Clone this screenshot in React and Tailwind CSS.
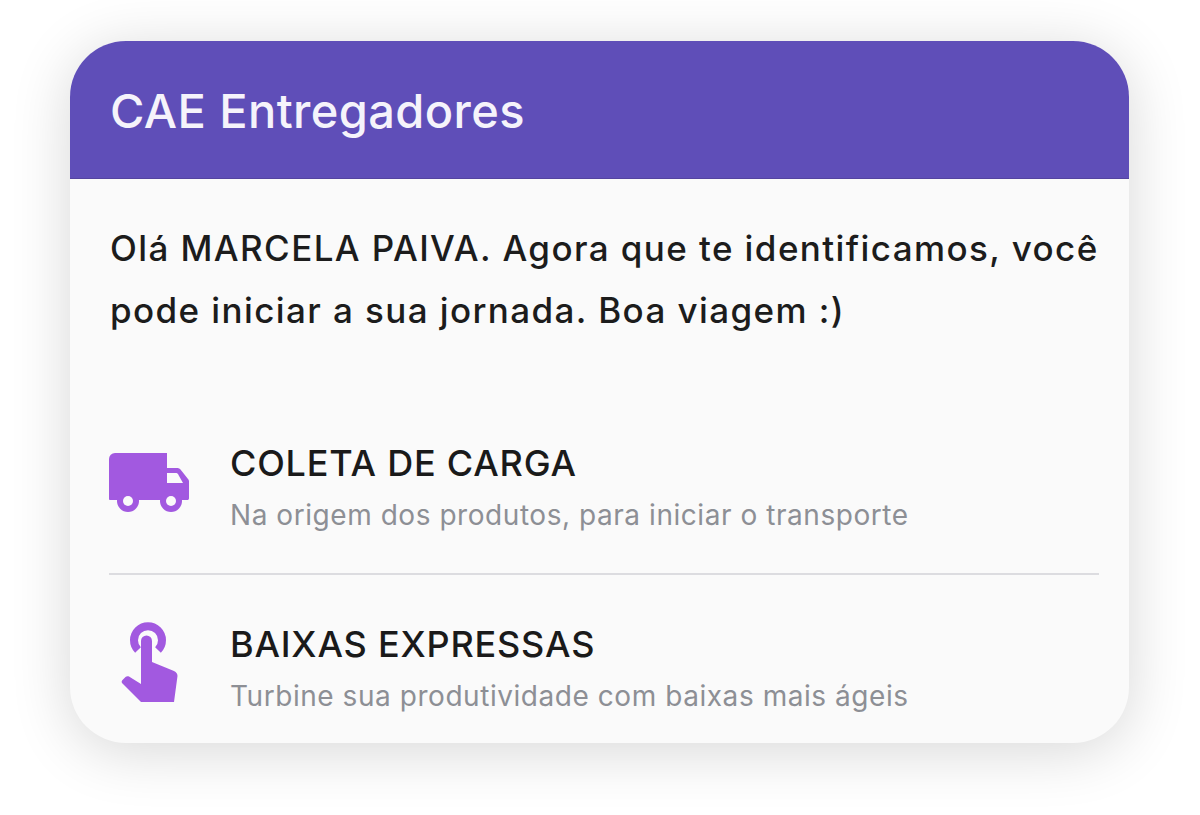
const TruckIcon = () => (
  <svg className="w-[81px] h-[60px]" viewBox="0 0 81 60" fill="#a259e0">
    <path fillRule="evenodd" d="M0 6a6 6 0 0 1 6-6h52v15h10c1.500 0 2.500.5 3.500 1.500L79 26c1 1 1 2 1 3v16c0 1.500-.5 2-2 2H1c-.5 0-1-.5-1-1zM58 20v10h16l-4.500-8c-.5-1.500-1.500-2-3-2z" />
    <circle cx="19" cy="48" r="11" />
    <circle cx="62" cy="48" r="11" />
    <circle cx="19" cy="48" r="5" fill="#fafafa" />
    <circle cx="62" cy="48" r="5" fill="#fafafa" />
  </svg>
)

const TapIcon = () => (
  <svg className="w-[58px] h-[82px]" viewBox="0 0 58 82" fill="#a259e0">
    <path d="M17 28A14 14 0 1 1 37 28" fill="none" stroke="#a259e0" strokeWidth="8" />
    <path d="M20 19a5.500 5.500 0 0 1 11 0v21l22 9c2.500 1 3.500 3 3.500 5L53 80H20L1 61c-.5-1-.5-2 .5-3l3-3c1-1 2.500-1 3.500-.5L20 62z" />
  </svg>
)

const options = [
  { title: 'COLETA DE CARGA', desc: 'Na origem dos produtos, para iniciar o transporte', icon: <TruckIcon />, iconClass: 'pb-[10px]' },
  { title: 'BAIXAS EXPRESSAS', desc: 'Turbine sua produtividade com baixas mais ágeis', icon: <TapIcon />, iconClass: 'pb-[12px]' },
]

export default function App() {
  return (
    <div className="w-[1200px] h-[815px] bg-white overflow-hidden pt-[41px] pl-[70px] font-['Inter',sans-serif]">
      <div className="w-[1059px] h-[702px] rounded-[56px] overflow-hidden bg-[#fafafa] shadow-[0_8px_60px_rgba(0,0,0,0.16)]">
        {/* Header */}
        <div className="h-[138px] bg-[#5f4eb8] flex items-center pl-[40px] pt-[2px] border-b border-[#54449f]">
          <h1 className="text-[47px] leading-none font-[450] text-[#f5f3fb] tracking-[0.4px]">CAE Entregadores</h1>
        </div>

        <div className="pl-[39px] pr-[30px]">
          <p className="mt-[38px] pl-px text-[35px] leading-[62px] font-[450] text-[#1c1c1c] tracking-[1.4px] whitespace-nowrap">
            Olá MARCELA PAIVA. Agora que te identificamos, você
            <br />
            pode iniciar a sua jornada. Boa viagem :)
          </p>

          {/* Options */}
          <div className="mt-[100px]">
            {options.map((opt, index) => (
              <div
                key={opt.title}
                className={index === 0 ? 'pb-[38px] border-b-2 border-[#dcdce0]' : 'pt-[47px]'}
              >
                <div className="flex items-center">
                  <div className={`w-[121px] flex-shrink-0 pr-[40px] flex justify-center ${opt.iconClass}`}>{opt.icon}</div>
                  <div>
                    <div className="text-[36px] leading-[44px] font-[450] text-[#1a1a1a] tracking-[0.8px] whitespace-nowrap">{opt.title}</div>
                    <div className="text-[28px] leading-[40px] mt-[10px] text-[#8d8f95] tracking-[0.55px] whitespace-nowrap">{opt.desc}</div>
                  </div>
                </div>
              </div>
            ))}
          </div>
        </div>
      </div>
    </div>
  )
}
